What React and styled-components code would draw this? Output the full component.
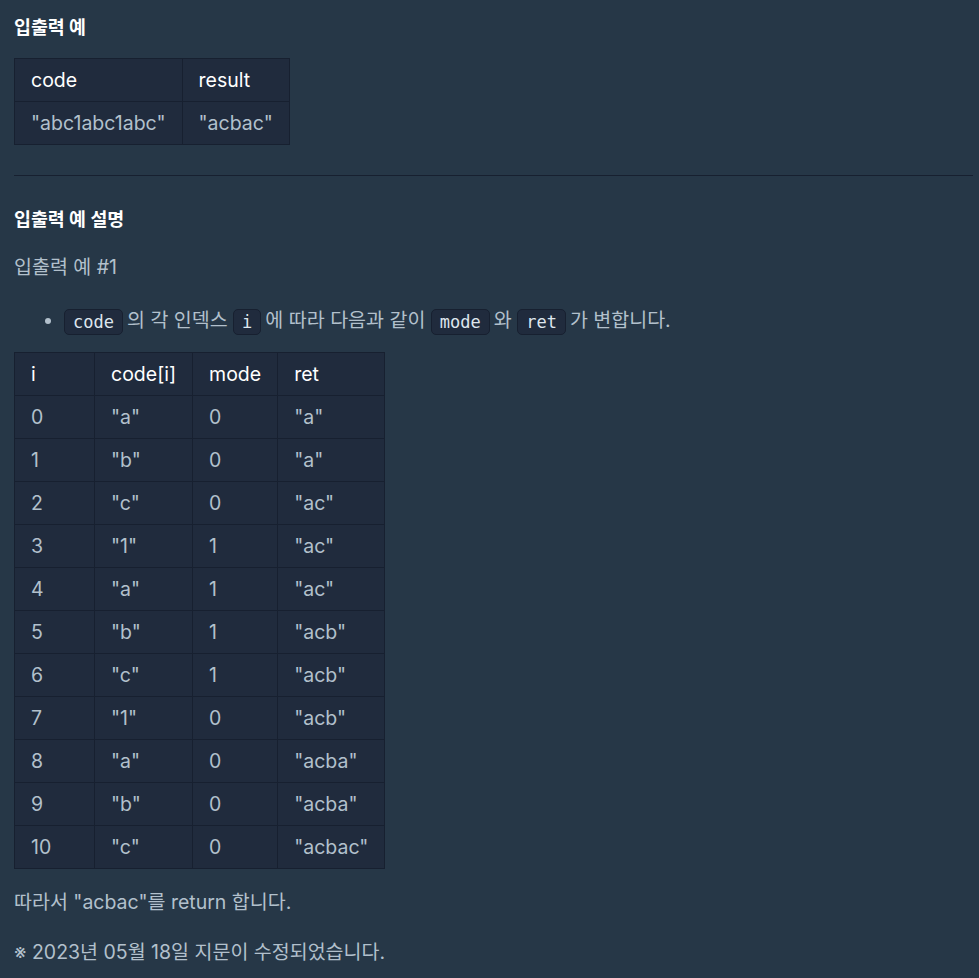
import React from "react";
import styled, { createGlobalStyle } from "styled-components";

const GlobalStyle = createGlobalStyle`
  html, body {
    margin: 0;
    padding: 0;
    background-color: #263747;
  }
`;

const Page = styled.div`
  box-sizing: border-box;
  width: 100%;
  min-height: 100vh;
  padding: 15px 6px 20px 14px;
  background-color: #263747;
  color: #b2c0cc;
  font-family: Inter, "Noto Sans CJK KR", sans-serif;
  font-size: 19.5px;
  line-height: 28px;
`;

const Heading = styled.h5`
  margin: ${(p) => p.$mt || 0}px 0 0 0;
  color: #ffffff;
  font-size: 18.4px;
  font-weight: 700;
  line-height: 24px;
`;

const Table = styled.table`
  border-collapse: collapse;
  background-color: #202b3d;
  margin: ${(p) => p.$mt || 0}px 0 0 0;
`;

const Th = styled.th`
  box-sizing: border-box;
  min-width: 80px;
  padding: 7px 16px;
  border: 1px solid #172030;
  text-align: left;
  font-weight: 400;
  color: #ffffff;
  white-space: nowrap;
`;

const Td = styled.td`
  box-sizing: border-box;
  min-width: 80px;
  padding: 7px 16px;
  border: 1px solid #172030;
  color: #b2c0cc;
  white-space: nowrap;
`;

const Rule = styled.hr`
  margin: 30px 0 0 0;
  border: none;
  border-top: 1px solid #172030;
  height: 0;
`;

const Para = styled.p`
  margin: ${(p) => p.$mt || 0}px 0 0 0;
`;

const List = styled.ul`
  margin: 25px 0 0 0;
  padding-left: 50px;
  list-style: disc;
`;

const Code = styled.code`
  display: inline-block;
  font-family: "DejaVu Sans Mono", monospace;
  font-size: 17px;
  line-height: 24px;
  padding: 0 8px;
  margin: 0 4px 0 0;
  color: #dee6ee;
  background-color: #202b3d;
  border: 1px solid #172030;
  border-radius: 5px;
  vertical-align: middle;
`;

const steps = [
  ["0", '"a"', "0", '"a"'],
  ["1", '"b"', "0", '"a"'],
  ["2", '"c"', "0", '"ac"'],
  ["3", '"1"', "1", '"ac"'],
  ["4", '"a"', "1", '"ac"'],
  ["5", '"b"', "1", '"acb"'],
  ["6", '"c"', "1", '"acb"'],
  ["7", '"1"', "0", '"acb"'],
  ["8", '"a"', "0", '"acba"'],
  ["9", '"b"', "0", '"acba"'],
  ["10", '"c"', "0", '"acbac"'],
];

export default function App() {
  return (
    <>
      <GlobalStyle />
      <Page>
        <Heading>입출력 예</Heading>
        <Table $mt={19}>
          <thead>
            <tr>
              <Th>code</Th>
              <Th>result</Th>
            </tr>
          </thead>
          <tbody>
            <tr>
              <Td>"abc1abc1abc"</Td>
              <Td>"acbac"</Td>
            </tr>
          </tbody>
        </Table>
        <Rule />
        <Heading $mt={31}>입출력 예 설명</Heading>
        <Para $mt={22}>입출력 예 #1</Para>
        <List>
          <li>
            <Code>code</Code>의 각 인덱스 <Code>i</Code>에 따라 다음과 같이{" "}
            <Code>mode</Code>와 <Code>ret</Code>가 변합니다.
          </li>
        </List>
        <Table $mt={17}>
          <thead>
            <tr>
              <Th>i</Th>
              <Th>code[i]</Th>
              <Th>mode</Th>
              <Th>ret</Th>
            </tr>
          </thead>
          <tbody>
            {steps.map((r) => (
              <tr key={r[0]}>
                {r.map((c, i) => (
                  <Td key={i}>{c}</Td>
                ))}
              </tr>
            ))}
          </tbody>
        </Table>
        <Para $mt={19}>따라서 "acbac"를 return 합니다.</Para>
        <Para $mt={22}>※ 2023년 05월 18일 지문이 수정되었습니다.</Para>
      </Page>
    </>
  );
}
